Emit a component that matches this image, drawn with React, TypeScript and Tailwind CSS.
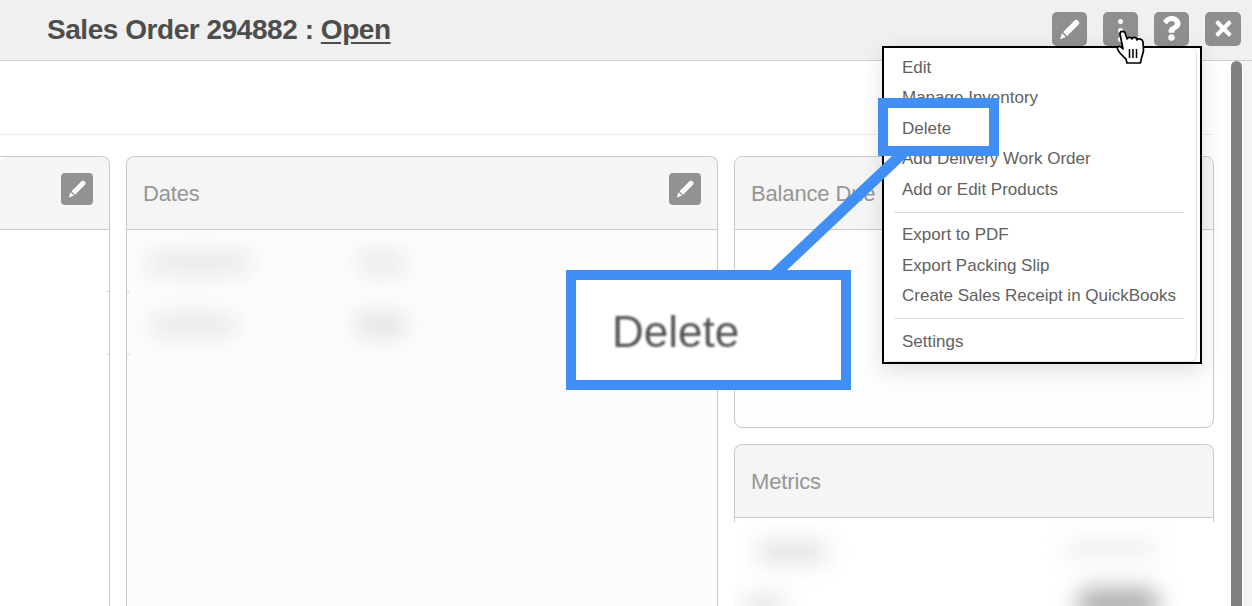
import { FaQuestion, FaTimes } from 'react-icons/fa';

const menuGroups = [
  ['Edit', 'Manage Inventory', 'Delete', 'Add Delivery Work Order', 'Add or Edit Products'],
  ['Export to PDF', 'Export Packing Slip', 'Create Sales Receipt in QuickBooks'],
  ['Settings'],
];

function PencilIcon({ className }: { className: string }) {
  return (
    <svg viewBox="0 0 24 24" fill="currentColor" className={className}>
      <path d="M5.2 15 16.6 3.6q1.6-1.6 3.2 0l.8.8q1.600 1.600 0 3.200L9.200 19Z" />
      <path d="M4.100 16.300 7.900 20.100 2 22.200Z" />
    </svg>
  );
}

function IconButton({ children, className = 'w-[35px]' }: { children: React.ReactNode; className?: string }) {
  return (
    <div className={`flex h-[34px] items-center justify-center rounded-[5px] bg-[#8f8f8f] text-white ${className}`}>
      {children}
    </div>
  );
}

function EditButton() {
  return (
    <div className="flex h-8 w-8 items-center justify-center rounded bg-[#929292] text-white">
      <PencilIcon className="h-[21px] w-[21px]" />
    </div>
  );
}

function Smudge({ className }: { className: string }) {
  return <div className={`rounded-full ${className}`} />;
}

function CardHeader({ title, edit = false }: { title: string; edit?: boolean }) {
  return (
    <div className="flex h-[73px] shrink-0 items-center justify-between rounded-t-[8px] border-b border-[#c9c9c9] bg-[#f5f5f5] pl-4 pr-4">
      <span className="mt-[1px] text-[22px] tracking-[-0.15px] text-[#969696]">{title}</span>
      {edit && <div className="-mt-[9px]"><EditButton /></div>}
    </div>
  );
}

function Tick({ side }: { side: 'l' | 'r' }) {
  return <div className={`absolute bottom-0 h-px w-[3px] bg-[#d8d8d8] ${side === 'l' ? 'left-0' : 'right-0'}`} />;
}

function Callouts() {
  return (
    <>
      <svg className="absolute left-0 top-0 h-[606px] w-[1252px]" viewBox="0 0 1252 606">
        <polygon points="769,272 785,272 909,155 893,155" fill="#418ff5" />
      </svg>
      <div className="absolute left-[878px] top-[98px] h-[58px] w-[121px] border-[10px] border-[#418ff5]" />
      <div className="absolute left-[566px] top-[270px] flex h-[120px] w-[285px] items-center border-[10px] border-[#418ff5] bg-white pl-[36px]">
        <span className="mt-[3px] text-[44px] leading-none text-[#555] blur-[1px]">Delete</span>
      </div>
    </>
  );
}

function Cursor() {
  return (
    <svg className="absolute left-[1115px] top-[29px] h-[36px] w-[30px]" viewBox="0 0 30 36">
      <path
        d="M5 5C5 1.500 10 1.500 10.500 5L12 10C13 7.500 16.500 8 17 10C18 7.500 21.500 8 22 11C23.500 9 27.500 10 28 13L28.500 21C28.500 25 26 28 25.500 34H12L11 30C8 27 4 24 2.500 20C2 17 5 16.500 7 19L8 20Z"
        fill="#fff"
        stroke="#000"
        strokeWidth="1.700"
        strokeLinejoin="round"
      />
      <path d="M14.500 20v9M18 20v9M21.500 20v9" stroke="#000" strokeWidth="1.500" fill="none" />
    </svg>
  );
}

export default function App() {
  return (
    <div className="relative h-[606px] w-[1252px] overflow-hidden bg-[#f4f4f4] font-['Liberation_Sans',Arial,sans-serif]">
      <header className="flex h-[61px] items-center justify-between border-b border-[#cfcfcf] bg-[#f0f0f0] pl-[47px] pr-[11px]">
        <h1 className="text-[28px] font-bold tracking-[-0.45px] text-[#4d4d4d]">
          Sales Order 294882 : <span className="underline underline-offset-[3px]">Open</span>
        </h1>
        <div className="-mt-[3px] flex items-center gap-[16px]">
          <IconButton>
            <PencilIcon className="h-[24px] w-[24px]" />
          </IconButton>
          <IconButton>
            <div className="mt-[4px] flex flex-col gap-[4px]">
              <span className="h-[5px] w-[5px] rounded-full bg-white" />
              <span className="h-[5px] w-[5px] rounded-full bg-white" />
              <span className="h-[5px] w-[5px] rounded-full bg-white" />
            </div>
          </IconButton>
          <IconButton>
            <FaQuestion className="h-[25px] w-[25px]" />
          </IconButton>
          <IconButton className="w-[36px]">
            <FaTimes className="h-[23px] w-[23px]" />
          </IconButton>
        </div>
      </header>

      <main className="flex h-[545px] w-[1243px] rounded-tr-[8px] bg-white">
        <div className="w-[1214px] shrink-0">
          <div className="h-[74px] border-b border-[#ececec]" />
          <div className="mt-[21px] flex h-[450px] gap-4">
            <section className="flex w-[110px] shrink-0 flex-col rounded-tr-[8px] border-r border-t border-[#c9c9c9]">
              <CardHeader title="" edit />
              <div className="relative h-[62px]"><Tick side="r" /></div>
              <div className="relative h-[63px]"><Tick side="r" /></div>
            </section>

            <section className="flex w-[592px] shrink-0 flex-col rounded-t-[8px] border-x border-t border-[#c9c9c9] bg-[#fcfcfc]">
              <CardHeader title="Dates" edit />
              <div className="relative flex h-[62px] items-center pl-[20px]">
                <Smudge className="mt-[3px] h-[20px] w-[104px] bg-[#e6e6e6] blur-[11px]" />
                <Smudge className="ml-[107px] mt-[3px] h-[20px] w-[48px] bg-[#e6e6e6] blur-[11px]" />
                <Tick side="l" />
              </div>
              <div className="relative flex h-[63px] items-center pl-[24px]">
                <Smudge className="mt-[3px] h-[20px] w-[86px] bg-[#e6e6e6] blur-[11px]" />
                <Smudge className="ml-[118px] mt-[3px] h-[22px] w-[52px] bg-[#e0e0e0] blur-[11px]" />
                <Tick side="l" />
              </div>
            </section>

            <div className="flex w-[480px] shrink-0 flex-col gap-4">
              <section className="flex h-[272px] shrink-0 flex-col rounded-[8px] border border-[#c9c9c9] bg-[#fdfdfd]">
                <CardHeader title="Balance Due" />
              </section>
              <section className="flex grow flex-col rounded-t-[8px] border-x border-t border-[#c9c9c9]">
                <CardHeader title="Metrics" />
                <div className="relative -mx-px mt-[4px] grow overflow-hidden bg-white">
                  <div className="flex h-[58px] items-center justify-between pl-[22px] pr-[56px]">
                    <Smudge className="mt-[2px] h-[24px] w-[72px] bg-[#e4e4e4] blur-[11px]" />
                    <Smudge className="mt-[-4px] h-[18px] w-[94px] bg-[#eeeeee] blur-[11px]" />
                  </div>
                  <div className="flex h-[32px] items-start justify-between pl-[8px] pr-[54px]">
                    <Smudge className="mt-[14px] h-[24px] w-[44px] bg-[#e6e6e6] blur-[11px]" />
                    <Smudge className="mt-[8px] h-[32px] w-[84px] bg-[#b0b0b0] blur-[11px]" />
                  </div>
                </div>
              </section>
            </div>
          </div>
        </div>
        <div className="ml-[17px] h-full w-[11px] rounded-t-[6px] bg-[#808080]" />
      </main>

      <div className="absolute left-[882px] top-[46px] h-[318px] w-[320px] border-2 border-black bg-white shadow-[0_6px_20px_rgba(0,0,0,0.12)]">
        <div className="mr-[3px] h-[314px] rounded-[6px] border-r border-b border-[#e4e4e4] pt-[4px] text-[17px] text-[#616161]">
          {menuGroups.map((items, i) => (
            <div key={items[0]}>
              {i > 0 && <div className="ml-[10px] mr-[12px] my-[7px] h-px bg-[#dcdcdc]" />}
              {items.map((item) => (
                <div key={item} className="flex h-[30.500px] items-center pl-[18px]">
                  {item}
                </div>
              ))}
            </div>
          ))}
        </div>
      </div>

      <Callouts />
      <Cursor />
    </div>
  );
}
